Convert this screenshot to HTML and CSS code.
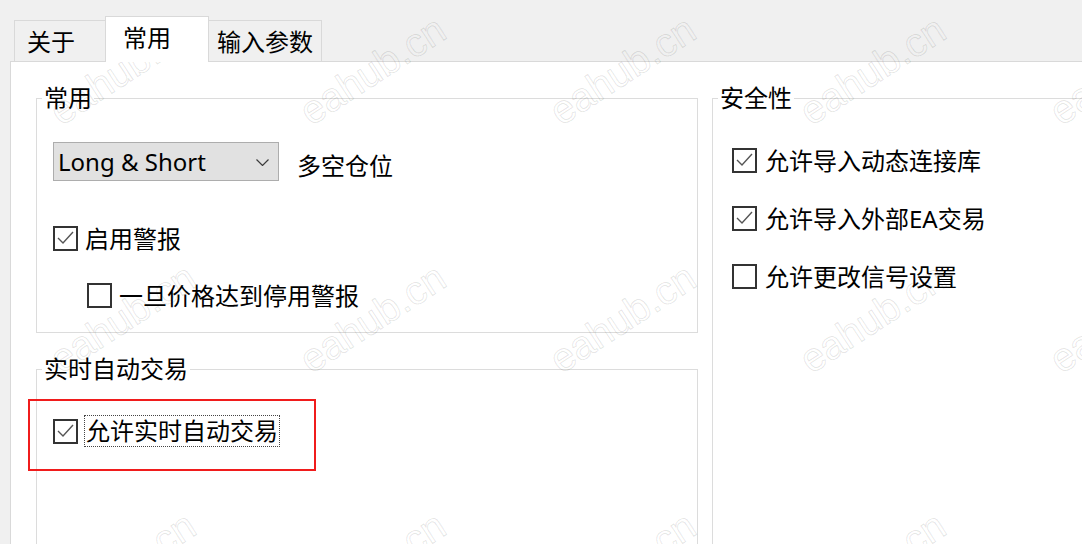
FILE: index.html
```html
<!DOCTYPE html>
<html lang="zh-CN">
<head>
<meta charset="utf-8">
<title>常用</title>
<link rel="stylesheet" href="styles.css">
</head>
<body>
<div class="window">
  <div class="tabs">
    <div class="tab tab-about">关于</div>
    <div class="tab tab-active">常用</div>
    <div class="tab tab-inputs">输入参数</div>
  </div>
  <div class="panel">
    <div class="col col-left">
      <fieldset class="group group-common">
        <legend>常用</legend>
        <div class="group-body body-common">
          <div class="combo-row">
            <div class="combo">
              <span class="combo-text">Long &amp; Short</span>
              <svg class="chevron" width="13" height="7" viewBox="0 0 13 7"><polyline points="0.5,0.5 6.5,6.5 12.5,0.5" fill="none" stroke="#3c3c3c" stroke-width="1.2"/></svg>
            </div>
            <span class="combo-label">多空仓位</span>
          </div>
          <div class="check row-alerts">
            <span class="box"><svg width="21" height="21" viewBox="0 0 21 21"><polyline points="3,10 8,15 18,4" fill="none" stroke="#555" stroke-width="1.4"/></svg></span>
            <span class="check-text">启用警报</span>
          </div>
          <div class="check row-indent">
            <span class="box"></span>
            <span class="check-text">一旦价格达到停用警报</span>
          </div>
        </div>
      </fieldset>
      <fieldset class="group group-live">
        <legend>实时自动交易</legend>
        <div class="group-body body-live">
          <div class="check row-live">
            <span class="box"><svg width="21" height="21" viewBox="0 0 21 21"><polyline points="3,10 8,15 18,4" fill="none" stroke="#555" stroke-width="1.4"/></svg></span>
            <span class="check-text focus">允许实时自动交易</span>
          </div>
        </div>
      </fieldset>
    </div>
    <div class="col col-right">
      <fieldset class="group group-security">
        <legend>安全性</legend>
        <div class="group-body body-security">
          <div class="check row-sec">
            <span class="box"><svg width="21" height="21" viewBox="0 0 21 21"><polyline points="3,10 8,15 18,4" fill="none" stroke="#555" stroke-width="1.4"/></svg></span>
            <span class="check-text">允许导入动态连接库</span>
          </div>
          <div class="check row-sec">
            <span class="box"><svg width="21" height="21" viewBox="0 0 21 21"><polyline points="3,10 8,15 18,4" fill="none" stroke="#555" stroke-width="1.4"/></svg></span>
            <span class="check-text">允许导入外部EA交易</span>
          </div>
          <div class="check row-sec">
            <span class="box"></span>
            <span class="check-text">允许更改信号设置</span>
          </div>
        </div>
      </fieldset>
    </div>
  </div>
  <div class="annotation"></div>
  <div class="wm-layer">
    <span class="wm">eahub.cn</span><span class="wm">eahub.cn</span><span class="wm">eahub.cn</span><span class="wm">eahub.cn</span><span class="wm">eahub.cn</span>
    <span class="wm">eahub.cn</span><span class="wm">eahub.cn</span><span class="wm">eahub.cn</span><span class="wm">eahub.cn</span><span class="wm">eahub.cn</span>
    <span class="wm">eahub.cn</span><span class="wm">eahub.cn</span><span class="wm">eahub.cn</span><span class="wm">eahub.cn</span><span class="wm">eahub.cn</span>
  </div>
</div>
</body>
</html>
```
FILE: styles.css
```css
html, body {
  margin: 0;
  padding: 0;
  width: 1082px;
  height: 544px;
  overflow: hidden;
  background: #f0f0f0;
}

.window {
  position: relative;
  width: 1082px;
  height: 544px;
  overflow: hidden;
  font-family: "Noto Sans", "Noto Sans CJK SC", sans-serif;
  font-size: 24px;
  line-height: 24px;
  color: #000;
}

/* ---------- tabs ---------- */
.tabs {
  display: flex;
  align-items: flex-end;
  height: 61px;
  padding-left: 14px;
  box-sizing: border-box;
}

.tab {
  box-sizing: border-box;
  height: 41px;
  border: 1px solid #d9d9d9;
  border-bottom: 0;
  background: #f0f0f0;
  padding-top: 9px;
  white-space: nowrap;
}

.tab-about {
  width: 91px;
  border-right: 0;
  padding-left: 12px;
}

.tab-active {
  position: relative;
  z-index: 1;
  width: 104px;
  height: 46px;
  margin-bottom: -1px;
  background: #fff;
  padding-left: 17px;
  padding-top: 9px;
}

.tab-inputs {
  width: 113px;
  border-left: 0;
  padding-left: 8px;
}

/* ---------- panel ---------- */
.panel {
  box-sizing: border-box;
  height: 483px;
  margin-left: 10px;
  border-left: 1px solid #d9d9d9;
  border-top: 1px solid #d9d9d9;
  background: #fff;
  display: flex;
  gap: 14px;
  padding: 24px 0 0 25px;
}

.col {
  display: flex;
  flex-direction: column;
  flex: none;
  width: 662px;
}

/* ---------- group boxes ---------- */
.group {
  box-sizing: border-box;
  flex: none;
  margin: 0;
  padding: 0;
  min-width: 0;
  border: 1px solid #dcdcdc;
}

.group legend {
  margin-left: 5px;
  padding: 0 2px;
  font-size: 24px;
  line-height: 24px;
}

.group-common { height: 247px; }
.group-live { height: 260px; margin-top: 24px; }
.group-security { height: 520px; }

.body-common { padding: 32px 0 0 16px; }
.body-live { padding: 34px 0 0 16px; }
.body-security { padding: 38px 0 0 19px; }

/* ---------- combo ---------- */
.combo-row {
  display: flex;
  align-items: flex-start;
}

.combo {
  box-sizing: border-box;
  width: 226px;
  height: 39px;
  border: 1px solid #adadad;
  background: #e1e1e1;
  display: flex;
  align-items: center;
  justify-content: space-between;
  padding: 0 9px 0 4px;
}

.combo-text {
  font-family: "Noto Sans", sans-serif;
  font-size: 24px;
}

.chevron { display: block; margin-top: 2px; }

.combo-label {
  margin-left: 18px;
  margin-top: 12px;
}

/* ---------- checkboxes ---------- */
.check {
  display: flex;
  align-items: center;
}

.box {
  box-sizing: border-box;
  flex: none;
  width: 25px;
  height: 25px;
  border: 2px solid #333;
  background: #fff;
}

.box svg { display: block; }

.check-text {
  margin-left: 7px;
  white-space: nowrap;
}

.row-alerts { margin-top: 45px; }
.row-indent { margin-top: 32px; margin-left: 34px; }

.row-sec + .row-sec { margin-top: 33px; }
.row-sec .check-text { margin-left: 8px; }

.focus {
  margin-left: 6px;
  padding: 3px 1px;
  border: 1px dotted #444;
}

/* ---------- annotation ---------- */
.annotation {
  position: absolute;
  left: 28px;
  top: 399px;
  width: 288px;
  height: 72px;
  box-sizing: border-box;
  border: 2px solid #f01c1c;
  pointer-events: none;
}

/* ---------- watermark ---------- */
.wm-layer {
  position: absolute;
  left: -3px;
  top: -54px;
  display: grid;
  grid-template-columns: repeat(5, 250px);
  grid-auto-rows: 248px;
  pointer-events: none;
}

.wm {
  place-self: center;
  transform: rotate(-33deg);
  font-family: "Liberation Sans", sans-serif;
  font-size: 40px;
  line-height: 40px;
  color: transparent;
  -webkit-text-stroke: 1px rgba(0, 0, 0, 0.11);
  white-space: nowrap;
}
```
